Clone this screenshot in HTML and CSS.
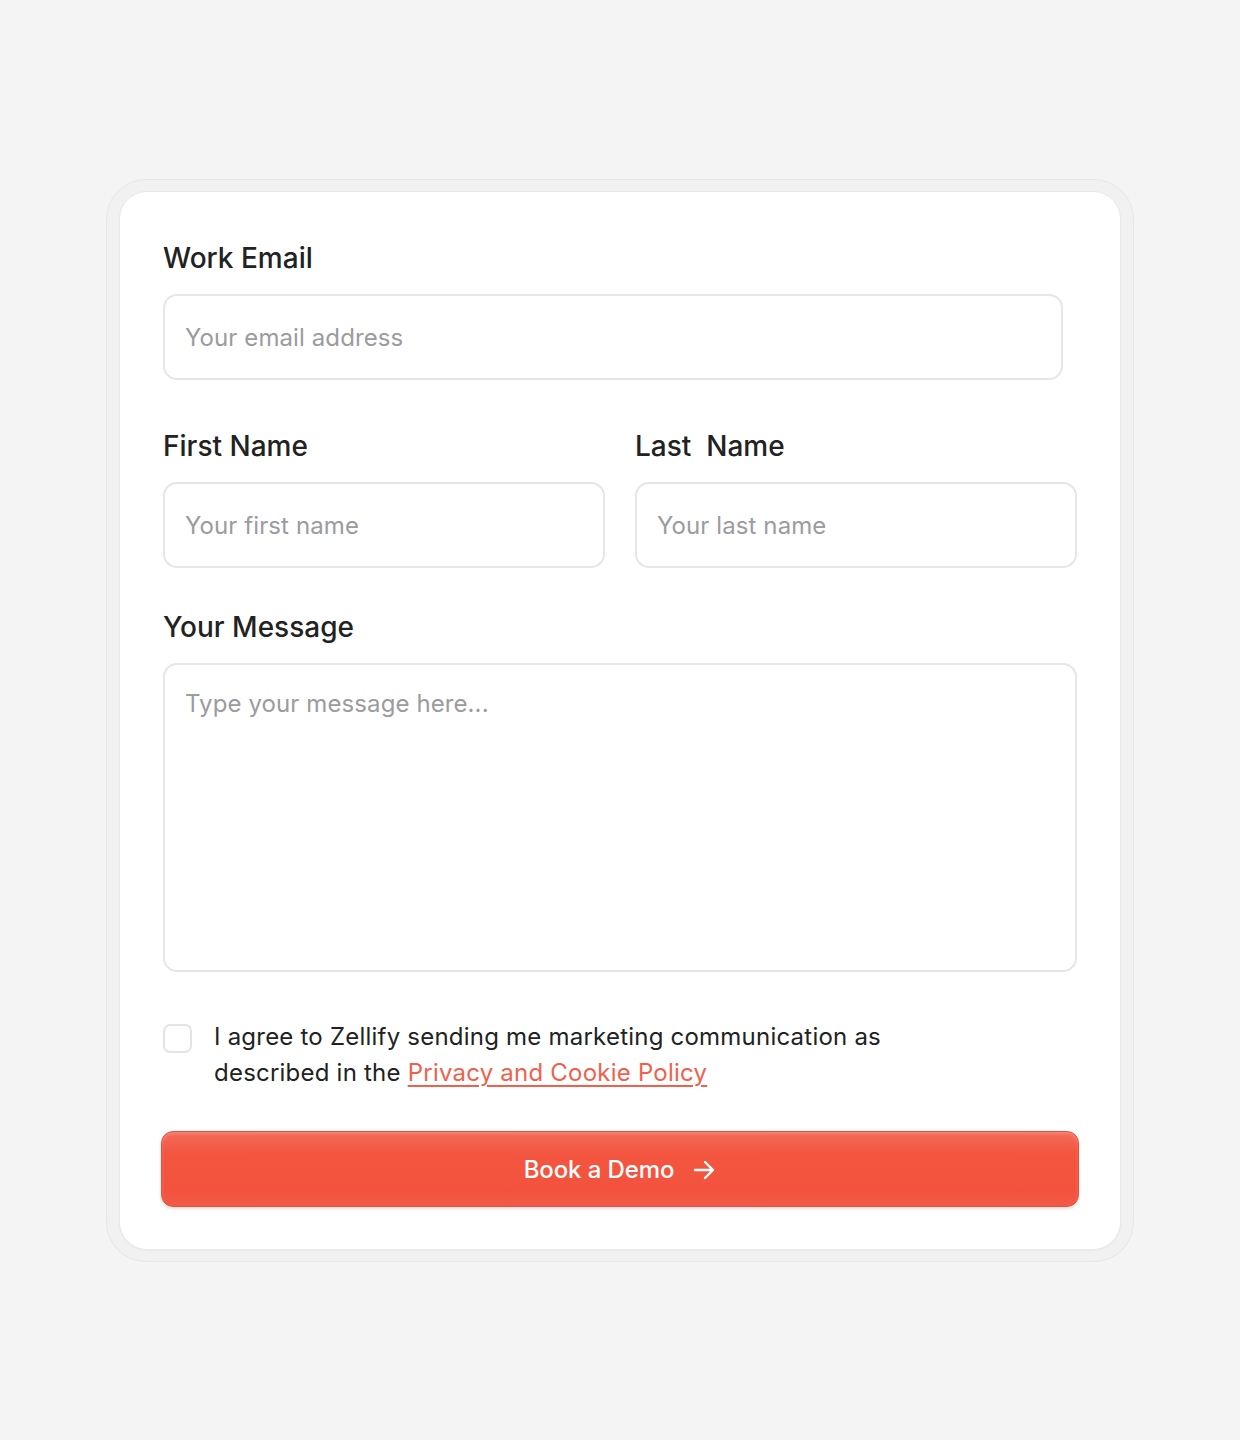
FILE: index.html
```html
<!DOCTYPE html>
<html lang="en">
<head>
<meta charset="utf-8">
<title>Book a Demo</title>
<link rel="stylesheet" href="styles.css">
</head>
<body>
<main class="page">
  <div class="frame">
    <form class="card">
      <label class="label">Work Email</label>
      <input class="field field-email" type="email" placeholder="Your email address">

      <div class="row">
        <div class="col">
          <label class="label">First Name</label>
          <input class="field" type="text" placeholder="Your first name">
        </div>
        <div class="col">
          <label class="label">Last&nbsp; Name</label>
          <input class="field" type="text" placeholder="Your last name">
        </div>
      </div>

      <label class="label">Your Message</label>
      <textarea class="field area" placeholder="Type your message here..."></textarea>

      <div class="consent">
        <span class="check"></span>
        <p class="consent-text">I agree to Zellify sending me marketing communication as<br>described in the <a href="#" class="link">Privacy and Cookie Policy</a></p>
      </div>

      <button type="button" class="btn">
        <span>Book a Demo</span>
        <svg width="24" height="24" viewBox="0 0 24 24" fill="none" stroke="#fff" stroke-width="2.4" stroke-linecap="round" stroke-linejoin="round"><path d="M3 12h18M13 4l8 8-8 8"/></svg>
      </button>
    </form>
  </div>
</main>
</body>
</html>
```
FILE: styles.css
```css
* { box-sizing: border-box; }
html, body { margin: 0; padding: 0; }
body {
  background: #f4f4f4;
  font-family: Inter, "Noto Sans", sans-serif;
  color: #222;
}
.page {
  min-height: 1440px;
  padding-top: 179px;
  display: flex;
  justify-content: center;
  align-items: flex-start;
}
.frame {
  width: 1028px;
  padding: 11px 12px;
  background: #f1f1f1;
  border: 1px solid #e7e7e7;
  border-radius: 40px;
}
.card {
  background: #fff;
  border: 1px solid #e9e9e9;
  border-radius: 28px;
  padding: 50px 43px 42px;
  display: flex;
  flex-direction: column;
  box-shadow: 0 1px 2px rgba(0,0,0,0.04);
}
.label {
  display: block;
  font-size: 28px;
  line-height: 32px;
  font-weight: 500;
  color: #222;
  letter-spacing: 0;
  margin-bottom: 20px;
}
.field {
  display: block;
  width: 100%;
  height: 86px;
  border: 2px solid #e6e6e6;
  border-radius: 14px;
  padding: 0 20px;
  font-family: inherit;
  font-size: 24px;
  letter-spacing: 0.1px;
  color: #222;
  background: #fff;
  outline: none;
}
.field::placeholder { color: #9b9ba0; }
.field-email { width: 900px; margin-bottom: 50px; }
.row {
  display: flex;
  gap: 30px;
  margin-bottom: 43px;
}
.col { flex: 1; min-width: 0; }
.area {
  height: 309px;
  resize: none;
  padding: 21px 20px;
  line-height: 36px;
  margin-bottom: 47px;
}
.consent {
  display: flex;
  align-items: flex-start;
  gap: 22px;
  margin-bottom: 40px;
}
.check {
  flex: none;
  width: 29px;
  height: 29px;
  margin-top: 5px;
  border: 2px solid #e4e4e4;
  border-radius: 7px;
  background: #fff;
}
.consent-text {
  margin: 0;
  font-size: 24px;
  line-height: 36px;
  letter-spacing: 0.22px;
  color: #222;
}
.link {
  color: #f2604c;
  text-decoration: underline;
  text-underline-offset: 4px;
  text-decoration-thickness: 1.5px;
}
.btn {
  display: flex;
  align-items: center;
  justify-content: center;
  gap: 18px;
  width: calc(100% + 4px);
  margin-left: -2px;
  height: 76px;
  border: 1.5px solid #e9503c;
  border-radius: 12px;
  background: linear-gradient(180deg, #f46c5b 0%, #f3553f 30%, #f3533e 80%, #f15a47 100%);
  box-shadow: inset 0 2px 3px rgba(255,255,255,0.18), 0 2px 3px rgba(0,0,0,0.12);
  color: #fff;
  font-family: inherit;
  font-size: 24px;
  font-weight: 500;
  letter-spacing: -0.1px;
  cursor: pointer;
}
.btn svg { margin-top: 1px; }
```
